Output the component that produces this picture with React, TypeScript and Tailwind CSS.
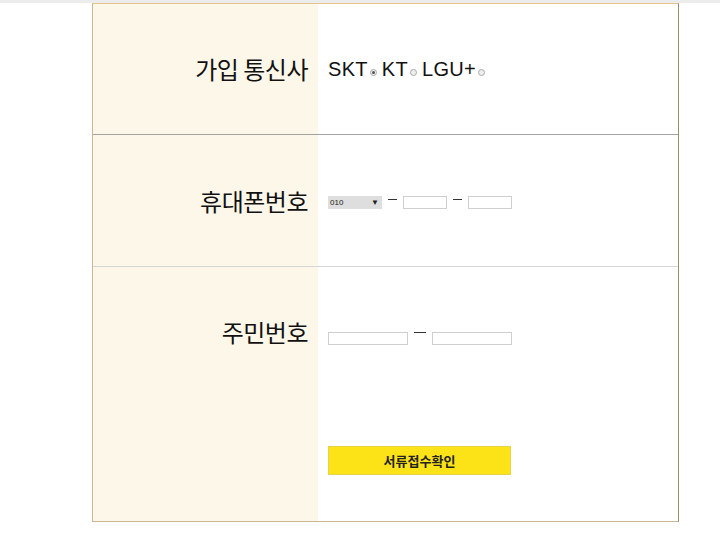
import React from 'react';

const labelFont = { fontFamily: '"Noto Sans CJK KR", "Noto Sans", sans-serif' };

// Small radio dot as in the screenshot
const Radio = ({ checked }: { checked?: boolean }) => (
  <span className="inline-flex items-center justify-center w-[7px] h-[7px] rounded-full border border-[#a9a9a9] bg-[#eeeeee] ml-[2px] mr-[5px] translate-y-[3px]">
    {checked && <span className="w-[3px] h-[3px] rounded-full bg-[#555]" />}
  </span>
);

const Dash = () => <span className="w-[9px] h-[1px] bg-[#333] -translate-y-[3px]" />;

export default function App() {
  return (
    <div className="w-[720px] h-[543px] bg-white font-['Liberation_Sans',Arial,sans-serif]">
      <div className="h-[3px] bg-[#ececec]" />
      <div className="ml-[92px] w-[587px] border border-[#c9b792] border-t-[#e4c48c] border-r-[#9c8c6c] bg-white">
        {/* 가입 통신사 */}
        <div className="flex h-[131px] border-b border-[#a3a3a3]">
          <div className="w-[225px] bg-[#fdf7e9] flex items-center justify-end pr-[10px]">
            <span className="text-[24px] text-[#111] tracking-[-0.5px]" style={labelFont}>가입 통신사</span>
          </div>
          <div className="flex-1 flex items-center pl-[10px] text-[20px] text-[#111] tracking-[0.3px]">
            <span>SKT</span>
            <Radio checked />
            <span>KT</span>
            <Radio />
            <span>LGU+</span>
            <Radio />
          </div>
        </div>

        {/* 휴대폰번호 */}
        <div className="flex h-[132px] border-b border-[#d6d6d6]">
          <div className="w-[225px] bg-[#fdf7e9] flex items-center justify-end pr-[10px]">
            <span className="text-[24px] text-[#111] tracking-[-0.5px]" style={labelFont}>휴대폰번호</span>
          </div>
          <div className="flex-1 flex items-center pl-[10px] pt-[4px] gap-[6px]">
            <div className="w-[54px] h-[13px] bg-[#dedede] flex items-center justify-between px-[2px] text-[8px] text-[#222]">
              <span>010</span>
              <span className="text-[8px] mr-[1px]">▼</span>
            </div>
            <Dash />
            <div className="w-[44px] h-[13px] border border-[#cfcfcf]" />
            <Dash />
            <div className="w-[44px] h-[13px] border border-[#cfcfcf]" />
          </div>
        </div>

        {/* 주민번호 */}
        <div className="flex">
          <div className="w-[225px] bg-[#fdf7e9] flex flex-col">
            <div className="h-[130px] flex items-center justify-end pr-[10px]">
              <span className="text-[24px] text-[#111] tracking-[-0.5px]" style={labelFont}>주민번호</span>
            </div>
            <div className="h-[124px]" />
          </div>
          <div className="flex-1 flex flex-col pl-[10px]">
            <div className="h-[130px] flex items-center gap-[6px] pt-[13px]">
              <div className="w-[80px] h-[13px] border border-[#cfcfcf]" />
              <span className="w-[12px] h-[1px] bg-[#333] -translate-y-[6px]" />
              <div className="w-[80px] h-[13px] border border-[#cfcfcf]" />
            </div>
            <div className="h-[124px] pt-[49px]">
              <button className="w-[183px] h-[29px] bg-[#fbe318] border border-[#e8d24a] flex items-center justify-center text-[13px] font-bold text-[#222]" style={labelFont}>
                서류접수확인
              </button>
            </div>
          </div>
        </div>
      </div>
    </div>
  );
}
